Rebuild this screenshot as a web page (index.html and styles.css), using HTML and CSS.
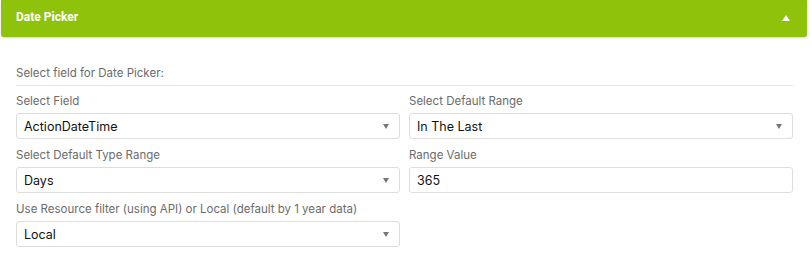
FILE: index.html
```html
<!DOCTYPE html>
<html lang="en">
<head>
    <meta charset="UTF-8">
    <meta name="viewport" content="width=device-width, initial-scale=1.0">
    <title>Date Picker</title>
    <link rel="stylesheet" href="styles.css">
</head>
<body>
    <div class="panel">
        <div class="panel-header">
            <span class="panel-title">Date Picker</span>
            <span class="panel-toggle"></span>
        </div>

        <div class="panel-body">
            <div class="legend">Select field for Date Picker:</div>

            <div class="form-grid">
                <div class="field">
                    <label>Select Field</label>
                    <div class="select">
                        <span>ActionDateTime</span>
                        <span class="caret"></span>
                    </div>
                </div>
                <div class="field">
                    <label>Select Default Range</label>
                    <div class="select">
                        <span>In The Last</span>
                        <span class="caret"></span>
                    </div>
                </div>
                <div class="field">
                    <label>Select Default Type Range</label>
                    <div class="select">
                        <span>Days</span>
                        <span class="caret"></span>
                    </div>
                </div>
                <div class="field">
                    <label>Range Value</label>
                    <div class="input">365</div>
                </div>
                <div class="field">
                    <label>Use Resource filter (using API) or Local (default by 1 year data)</label>
                    <div class="select">
                        <span>Local</span>
                        <span class="caret"></span>
                    </div>
                </div>
            </div>
        </div>
    </div>
</body>
</html>
```

FILE: styles.css
```css
/* Page */
body {
    margin: 0;
    font-family: Inter, "Liberation Sans", Arial, sans-serif;
    font-size: 11.5px;
    color: #222;
    background: #fff;
}

/* Panel */
.panel {
    margin: 0 5px 0 1px;
}

.panel-header {
    height: 37px;
    background: #8fc30b;
    border-radius: 0 0 3px 3px;
    box-shadow: 0 1px 2px rgba(0, 0, 0, 0.18);
    display: flex;
    align-items: center;
    justify-content: space-between;
    padding: 0 17px 0 15px;
    box-sizing: border-box;
}

.panel-title {
    font-family: Roboto, Arial, sans-serif;
    font-weight: bold;
    font-size: 12px;
    color: #fff;
    margin-top: -3px;
}

/* little up arrow on the right */
.panel-toggle {
    width: 0;
    height: 0;
    border-left: 4px solid transparent;
    border-right: 4px solid transparent;
    border-bottom: 6px solid #fff;
    margin-top: -1px;
}

.panel-body {
    padding: 28px 14px 0 15px;
}

.legend {
    line-height: 16px;
    color: #6b6b6b;
    padding-bottom: 4px;
    border-bottom: 1px solid #e5e5e5;
    margin-bottom: 7px;
}

/* Form */
.form-grid {
    display: grid;
    grid-template-columns: 1fr 1fr;
    column-gap: 9px;
    row-gap: 8px;
}

.field label {
    display: block;
    line-height: 16px;
    color: #6b6b6b;
    margin-bottom: 4px;
    white-space: nowrap;
}

.select, .input {
    height: 26px;
    box-sizing: border-box;
    border: 1px solid #ddd;
    border-radius: 3px;
    padding: 0 10px 0 7px;
    display: flex;
    align-items: center;
    justify-content: space-between;
    color: #111;
    font-size: 12.5px;
}

.caret {
    width: 0;
    height: 0;
    border-left: 3.5px solid transparent;
    border-right: 3.5px solid transparent;
    border-top: 5px solid #777;
}
```
